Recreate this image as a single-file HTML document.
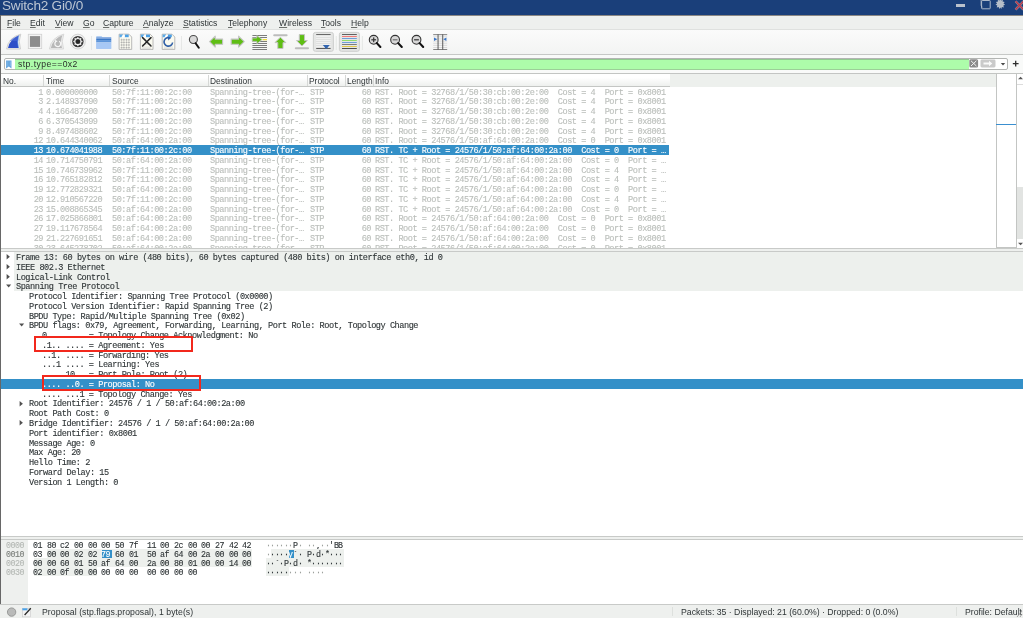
<!DOCTYPE html><html><head><meta charset="utf-8"><style>
*{margin:0;padding:0;box-sizing:border-box}
html,body{width:1023px;height:618px;overflow:hidden;background:#eef0ee}
body{position:relative;font-family:"Liberation Sans",sans-serif;font-size:8.6px;color:#2e3436}
.a{position:absolute}
.m{font-family:"Liberation Mono",monospace;font-size:8.6px;letter-spacing:-0.47px;white-space:pre;will-change:transform}
.hx{font-size:8.33px;letter-spacing:-0.457px}
.m{margin-left:-0.7px;margin-top:2px;-webkit-text-stroke:0.12px}
.t{white-space:pre;will-change:transform}
.row{position:absolute;left:1px;height:9.76px;line-height:9.76px}
.pl{color:#a7aca7}
.u{text-decoration:underline;text-underline-offset:1px;text-decoration-color:#6a6e6a}
</style></head><body>
<div class="a" style="left:0;top:0;width:1023px;height:14.6px;background:#1a3f7a"></div>
<div class="a t" style="left:2.4px;top:-1.9px;font-size:13.6px;letter-spacing:-0.22px;line-height:15px;color:#bcc6d3">Switch2 Gi0/0</div>
<div class="a" style="left:956px;top:4px;width:8.5px;height:2.8px;background:#b9c1cc"></div>
<svg class="a" style="left:978px;top:0" width="14" height="10"><path d="M3 0 V5.8 L4.6 7.2" stroke="#8a9ab2" fill="none" stroke-width="0.9"/><rect x="3.6" y="0.5" width="8.6" height="8.3" rx="0.6" fill="none" stroke="#bcc5d2" stroke-width="0.9"/></svg>
<svg class="a" style="left:995px;top:0" width="11" height="10"><path d="M5.3 -1.2 L6.1 0.6 L7.9 -0.3 L7.6 1.6 L9.7 1.9 L8.5 3.4 L10.1 4.8 L8.3 5.5 L8.9 7.5 L6.9 7.1 L6.3 9 L5.3 7.6 L4.3 9 L3.7 7.1 L1.7 7.5 L2.3 5.5 L0.5 4.8 L2.1 3.4 L0.9 1.9 L3 1.6 L2.7 -0.3 L4.5 0.6 Z" fill="#b5bec9"/></svg>
<svg class="a" style="left:1014px;top:0" width="9" height="11"><path d="M1.6 1.2 L9.5 9.6 M1.6 9.6 L9.5 1.2" stroke="#8d96a6" stroke-width="2.4"/><path d="M1.6 1.2 L9.5 9.6 M1.6 9.6 L9.5 1.2" stroke="#b8384a" stroke-width="1.5"/></svg>
<div class="a" style="left:0;top:14.5px;width:1023px;height:1px;background:#8b8884"></div>
<div class="a t" style="left:6.8px;top:17.6px;line-height:10px;color:#2e3436"><span class="u">F</span>ile</div>
<div class="a t" style="left:30px;top:17.6px;line-height:10px;color:#2e3436"><span class="u">E</span>dit</div>
<div class="a t" style="left:54.5px;top:17.6px;line-height:10px;color:#2e3436"><span class="u">V</span>iew</div>
<div class="a t" style="left:82.5px;top:17.6px;line-height:10px;color:#2e3436"><span class="u">G</span>o</div>
<div class="a t" style="left:102.6px;top:17.6px;line-height:10px;color:#2e3436"><span class="u">C</span>apture</div>
<div class="a t" style="left:143.2px;top:17.6px;line-height:10px;color:#2e3436"><span class="u">A</span>nalyze</div>
<div class="a t" style="left:183.2px;top:17.6px;line-height:10px;color:#2e3436"><span class="u">S</span>tatistics</div>
<div class="a t" style="left:228px;top:17.6px;line-height:10px;color:#2e3436"><span class="u">T</span>elephony</div>
<div class="a t" style="left:278.5px;top:17.6px;line-height:10px;color:#2e3436"><span class="u">W</span>ireless</div>
<div class="a t" style="left:321px;top:17.6px;line-height:10px;color:#2e3436"><span class="u">T</span>ools</div>
<div class="a t" style="left:351px;top:17.6px;line-height:10px;color:#2e3436"><span class="u">H</span>elp</div>
<div class="a" style="left:1px;top:29.2px;width:1022px;height:0.8px;background:#dfe1df"></div>
<div class="a" style="left:1px;top:30px;width:1022px;height:23.6px;background:linear-gradient(#fbfbfb,#f3f4f3)"></div>
<div class="a" style="left:1px;top:53.6px;width:1022px;height:1px;background:#c6c8c6"></div>
<div class="a" style="left:1px;top:54.6px;width:1022px;height:18.6px;background:#f9faf9"></div>
<div class="a" style="left:1px;top:73.2px;width:1022px;height:0.9px;background:#c3c5c3"></div>
<div class="a" style="left:0;top:15px;width:1.3px;height:589px;background:#676767"></div>
<svg class="a" style="left:0;top:0" width="460" height="56"><rect x="91.0" y="36" width="0.8" height="14" fill="#e2e4e2"/><rect x="181.1" y="36" width="0.8" height="14" fill="#e2e4e2"/><rect x="335.8" y="36" width="0.8" height="14" fill="#e2e4e2"/><rect x="361.90000000000003" y="36" width="0.8" height="14" fill="#e2e4e2"/><path d="M6.6 49 Q8.3 37.5 20.8 34.1 Q17.8 41 20.5 49 Z" fill="#ececec" stroke="#c6c6c6" stroke-width="0.8"/><path d="M8 48 Q10 38.8 19.4 35.3 Q16.8 41.5 19 48 Z" fill="#2d4fc8"/><path d="M9.5 41 Q13 37.5 19 35.6 Q17.2 38.5 17 41 Z" fill="#4a6ad6" opacity="0.6"/><path d="M18.8 35.8 Q17 41.5 18.6 47.8" stroke="#9cd0f6" stroke-width="0.6" fill="none"/><rect x="28.3" y="34.3" width="13.4" height="14.3" fill="#f5f5f5" stroke="#d0d0d0" stroke-width="0.8"/><rect x="29.9" y="36.1" width="10.2" height="10.8" fill="#8d8d8d"/><path d="M49.4 49 Q51.1 37.5 63.8 34.1 Q60.8 41 63.5 49 Z" fill="#eeeeee" stroke="#d2d2d2" stroke-width="0.8"/><path d="M50.9 48 Q52.9 38.8 62.4 35.3 Q59.8 41.5 62 48 Z" fill="#b8b8b8"/><path d="M55.6 41.8 A2.9 2.9 0 1 0 59.2 41.2" fill="none" stroke="#f6f6f6" stroke-width="1.3"/><path d="M55.2 39.6 L57.6 41.6 L55 42.6 Z" fill="#f6f6f6"/><circle cx="77.9" cy="41.6" r="7.4" fill="#f3f3f3" stroke="#c9c9c9" stroke-width="0.8"/><circle cx="77.9" cy="41.6" r="5.7" fill="#383838"/><circle cx="77.9" cy="41.6" r="3.1" fill="none" stroke="#f0f0f0" stroke-width="1.2"/><circle cx="81.80" cy="41.60" r="0.75" fill="#f0f0f0"/><circle cx="80.66" cy="44.36" r="0.75" fill="#f0f0f0"/><circle cx="77.90" cy="45.50" r="0.75" fill="#f0f0f0"/><circle cx="75.14" cy="44.36" r="0.75" fill="#f0f0f0"/><circle cx="74.00" cy="41.60" r="0.75" fill="#f0f0f0"/><circle cx="75.14" cy="38.84" r="0.75" fill="#f0f0f0"/><circle cx="77.90" cy="37.70" r="0.75" fill="#f0f0f0"/><circle cx="80.66" cy="38.84" r="0.75" fill="#f0f0f0"/><circle cx="77.9" cy="41.6" r="1.9" fill="#262626"/><path d="M96.3 36.2 H101.5 L102.5 37.2 H111.2 V48.8 H96.3 Z" fill="#9fc1ef"/><rect x="96.3" y="37.3" width="14.9" height="1.6" fill="#7fa5dc"/><rect x="96.3" y="38.9" width="14.9" height="1.5" fill="#3a78c6"/><rect x="96.3" y="40.4" width="14.9" height="2" fill="#5d95da"/><rect x="96.3" y="42.4" width="14.9" height="0.7" fill="#c6dbf6"/><rect x="96.3" y="43.1" width="14.9" height="5.7" fill="#a7c8f5"/><path d="M119.1 34.2 H128.89999999999998 L131.7 37 V49.4 H119.1 Z" fill="#fafaf0" stroke="#a8a8a8" stroke-width="0.8"/><path d="M119.5 34.6 H123.1 L121.5 37.2 H119.5 Z" fill="#5aaae8"/><path d="M124.69999999999999 34.6 H128.7 V37.2 H124.69999999999999 Z" fill="#4aa0e6"/><path d="M123.1 34.6 L121.5 37.2 H124.69999999999999 V34.6 Z" fill="#ffffff"/><path d="M140.4 34.2 H150.2 L153.0 37 V49.4 H140.4 Z" fill="#fafaf0" stroke="#a8a8a8" stroke-width="0.8"/><path d="M140.8 34.6 H144.4 L142.8 37.2 H140.8 Z" fill="#5aaae8"/><path d="M146.0 34.6 H150.0 V37.2 H146.0 Z" fill="#4aa0e6"/><path d="M144.4 34.6 L142.8 37.2 H146.0 V34.6 Z" fill="#ffffff"/><path d="M162.2 34.2 H171.99999999999997 L174.79999999999998 37 V49.4 H162.2 Z" fill="#fafaf0" stroke="#a8a8a8" stroke-width="0.8"/><path d="M162.6 34.6 H166.2 L164.6 37.2 H162.6 Z" fill="#5aaae8"/><path d="M167.79999999999998 34.6 H171.79999999999998 V37.2 H167.79999999999998 Z" fill="#4aa0e6"/><path d="M166.2 34.6 L164.6 37.2 H167.79999999999998 V34.6 Z" fill="#ffffff"/><path d="M121.6 38.699999999999996 V40.9 M120.5 39.8 H122.7" stroke="#9a9a9a" stroke-width="0.55"/><path d="M121.6 41.3 V43.5 M120.5 42.4 H122.7" stroke="#9a9a9a" stroke-width="0.55"/><path d="M121.6 43.9 V46.1 M120.5 45 H122.7" stroke="#9a9a9a" stroke-width="0.55"/><path d="M121.6 46.5 V48.7 M120.5 47.6 H122.7" stroke="#9a9a9a" stroke-width="0.55"/><path d="M123.89999999999999 38.699999999999996 V40.9 M122.8 39.8 H125.0" stroke="#9a9a9a" stroke-width="0.55"/><path d="M123.89999999999999 41.3 V43.5 M122.8 42.4 H125.0" stroke="#9a9a9a" stroke-width="0.55"/><path d="M123.89999999999999 43.9 V46.1 M122.8 45 H125.0" stroke="#9a9a9a" stroke-width="0.55"/><path d="M123.89999999999999 46.5 V48.7 M122.8 47.6 H125.0" stroke="#9a9a9a" stroke-width="0.55"/><path d="M126.5 38.699999999999996 V40.9 M125.4 39.8 H127.60000000000001" stroke="#9a9a9a" stroke-width="0.55"/><path d="M126.5 41.3 V43.5 M125.4 42.4 H127.60000000000001" stroke="#9a9a9a" stroke-width="0.55"/><path d="M126.5 43.9 V46.1 M125.4 45 H127.60000000000001" stroke="#9a9a9a" stroke-width="0.55"/><path d="M126.5 46.5 V48.7 M125.4 47.6 H127.60000000000001" stroke="#9a9a9a" stroke-width="0.55"/><path d="M128.9 38.699999999999996 V40.9 M127.8 39.8 H130.0" stroke="#9a9a9a" stroke-width="0.55"/><path d="M128.9 41.3 V43.5 M127.8 42.4 H130.0" stroke="#9a9a9a" stroke-width="0.55"/><path d="M128.9 43.9 V46.1 M127.8 45 H130.0" stroke="#9a9a9a" stroke-width="0.55"/><path d="M128.9 46.5 V48.7 M127.8 47.6 H130.0" stroke="#9a9a9a" stroke-width="0.55"/><rect x="142" y="44.5" width="9" height="0.5" fill="#c8c8c8"/><rect x="142" y="46.8" width="9" height="0.5" fill="#c8c8c8"/><rect x="142" y="48.6" width="9" height="0.5" fill="#c8c8c8"/><path d="M142.6 37.6 L151 46 M151 37.6 L142.6 46" stroke="#242424" stroke-width="1.5" stroke-linecap="round"/><rect x="164" y="46.8" width="9" height="0.5" fill="#c8c8c8"/><rect x="164" y="48.6" width="9" height="0.5" fill="#c8c8c8"/><path d="M170.6 38.2 A4.3 4.3 0 1 0 172.6 42.5" fill="none" stroke="#2f5ea6" stroke-width="1.6"/><path d="M167 36.4 L170.6 37.6 L168.6 40.4 Z" fill="#2f5ea6"/><circle cx="193.4" cy="39.5" r="4" fill="#d9d9d9" stroke="#4a4a4a" stroke-width="1.1"/><path d="M195.6 43.2 L198.8 47.8" stroke="#111" stroke-width="2" stroke-linecap="round"/><path d="M209.6 41.6 L215.2 36.2 V39.1 H222.6 V44.2 H215.2 V47.1 Z" fill="#5fbe14" stroke="#c4c4c4" stroke-width="1.1" stroke-linejoin="round"/><path d="M244.2 41.6 L238.6 36.2 V39.1 H231.2 V44.2 H238.6 V47.1 Z" fill="#5fbe14" stroke="#c4c4c4" stroke-width="1.1" stroke-linejoin="round"/><rect x="252.4" y="35.0" width="14.6" height="0.9" fill="#6e6e6e"/><rect x="252.4" y="37.1" width="14.6" height="0.9" fill="#6e6e6e"/><rect x="252.4" y="41.1" width="14.6" height="0.9" fill="#6e6e6e"/><rect x="252.4" y="43.1" width="14.6" height="0.9" fill="#6e6e6e"/><rect x="252.4" y="45.1" width="14.6" height="0.9" fill="#6e6e6e"/><rect x="252.4" y="47.1" width="14.6" height="0.9" fill="#6e6e6e"/><rect x="252.4" y="49.0" width="14.6" height="0.9" fill="#6e6e6e"/><rect x="262.6" y="39" width="4.4" height="1.3" fill="#f0dc3c"/><path d="M252.2 38 H256.8 V35.6 L262.2 39.6 L256.8 43.8 V41.4 H252.2 Z" fill="#5fbe14" stroke="#c8c8c8" stroke-width="0.8" stroke-linejoin="round"/><rect x="273.2" y="34.2" width="14.4" height="2" rx="1" fill="#bdbdbd"/><path d="M280.4 37.2 L285.8 42.6 H283 V48.5 H277.8 V42.6 H275 Z" fill="#5fbe14" stroke="#c2c2c2" stroke-width="1" stroke-linejoin="round"/><rect x="294.8" y="47.2" width="14.2" height="2" rx="1" fill="#bdbdbd"/><path d="M301.9 46 L307.3 40.6 H304.5 V34.6 H299.3 V40.6 H296.5 Z" fill="#5fbe14" stroke="#c2c2c2" stroke-width="1" stroke-linejoin="round"/><rect x="313.4" y="32.4" width="20" height="18.9" rx="2" fill="#e5e6e5" stroke="#cacbca" stroke-width="0.9"/><rect x="316.2" y="34.0" width="14.4" height="0.9" fill="#5a5a5a"/><rect x="316.2" y="36.0" width="14.4" height="0.9" fill="#f4f4f4"/><rect x="316.2" y="38.0" width="14.4" height="0.9" fill="#f4f4f4"/><rect x="316.2" y="40.0" width="14.4" height="0.9" fill="#f4f4f4"/><rect x="316.2" y="42.0" width="14.4" height="0.9" fill="#f4f4f4"/><rect x="316.2" y="44.0" width="14.4" height="0.9" fill="#f4f4f4"/><rect x="316.2" y="46.0" width="14.4" height="0.9" fill="#f4f4f4"/><rect x="316.2" y="48.0" width="14.4" height="0.9" fill="#4a4a4a"/><rect x="316.2" y="36.9" width="14.4" height="0.5" fill="#d6d8d6"/><rect x="316.2" y="38.9" width="14.4" height="0.5" fill="#d6d8d6"/><rect x="316.2" y="40.9" width="14.4" height="0.5" fill="#d6d8d6"/><rect x="316.2" y="42.9" width="14.4" height="0.5" fill="#d6d8d6"/><rect x="316.2" y="44.9" width="14.4" height="0.5" fill="#d6d8d6"/><rect x="316.2" y="46.9" width="14.4" height="0.5" fill="#d6d8d6"/><path d="M322.8 45 H329.8 L327.6 47.6 V48.6 H325 V47.6 Z" fill="#3466b0"/><rect x="339.4" y="32.4" width="20" height="18.9" rx="2" fill="#e5e6e5" stroke="#cacbca" stroke-width="0.9"/><rect x="342" y="34.0" width="14.8" height="1" fill="#606060"/><rect x="342" y="36.0" width="14.8" height="1" fill="#f07a7a"/><rect x="342" y="38.0" width="14.8" height="1" fill="#6e9fd8"/><rect x="342" y="40.0" width="14.8" height="1" fill="#92dc6e"/><rect x="342" y="42.0" width="14.8" height="1" fill="#6e9fd8"/><rect x="342" y="44.0" width="14.8" height="1" fill="#7d7d7d"/><rect x="342" y="46.0" width="14.8" height="1" fill="#e3c94a"/><rect x="342" y="48.0" width="14.8" height="1" fill="#4e4e4e"/><circle cx="373.7" cy="39.8" r="4.4" fill="#d8d8d8" stroke="#333" stroke-width="1.1"/><path d="M376.8 43.1 L380.4 47" stroke="#111" stroke-width="2.1" stroke-linecap="round"/><rect x="371.3" y="39.2" width="4.8" height="1.2" fill="#333"/><rect x="373.09999999999997" y="37.4" width="1.2" height="4.8" fill="#333"/><circle cx="395.1" cy="39.8" r="4.4" fill="#d8d8d8" stroke="#333" stroke-width="1.1"/><path d="M398.20000000000005 43.1 L401.8 47" stroke="#111" stroke-width="2.1" stroke-linecap="round"/><rect x="392.70000000000005" y="39.2" width="4.8" height="1.2" fill="#707070"/><circle cx="416.5" cy="39.8" r="4.4" fill="#d8d8d8" stroke="#333" stroke-width="1.1"/><path d="M419.6 43.1 L423.2 47" stroke="#111" stroke-width="2.1" stroke-linecap="round"/><rect x="414.1" y="39.2" width="4.8" height="1.2" fill="#333"/><rect x="433.2" y="34.40" width="14" height="0.7" fill="#505050"/><rect x="433.2" y="36.50" width="14" height="0.7" fill="#cfcfcf"/><rect x="433.2" y="38.60" width="14" height="0.7" fill="#cfcfcf"/><rect x="433.2" y="40.70" width="14" height="0.7" fill="#cfcfcf"/><rect x="433.2" y="42.80" width="14" height="0.7" fill="#cfcfcf"/><rect x="433.2" y="44.90" width="14" height="0.7" fill="#cfcfcf"/><rect x="433.2" y="47.00" width="14" height="0.7" fill="#cfcfcf"/><rect x="433.2" y="49.10" width="14" height="0.7" fill="#505050"/><rect x="437.6" y="34.4" width="0.9" height="15.2" fill="#4a4a4a"/><rect x="442.3" y="34.4" width="0.9" height="15.2" fill="#4a4a4a"/><path d="M434 37.4 L437.2 39.2 L434 41 Z" fill="#3a76c8"/><path d="M446.4 37.4 L443.3 39.2 L446.4 41 Z" fill="#3a76c8"/></svg>
<div class="a" style="left:3.5px;top:58.3px;width:1004.3px;height:11.9px;border:0.8px solid #b3b5b3;border-radius:2px;background:#fff"></div>
<div class="a" style="left:15.3px;top:58.9px;width:953.6px;height:10.8px;background:#adfcaa;border-top:0.6px solid #92c990;border-bottom:0.7px solid #9ccf98"></div>
<svg class="a" style="left:5px;top:59.5px" width="9" height="10"><path d="M1 0.5 H6.5 V8.6 L3.75 6.6 L1 8.6 Z" fill="#6aa9e0"/><path d="M2 1.4 V6 M5.5 1.4 V6" stroke="#9ec7ee" stroke-width="0.5"/></svg>
<div class="a t" style="left:17.9px;top:59.4px;line-height:10px;letter-spacing:0.45px;color:#2a2d2a">stp.type==0x2</div>
<svg class="a" style="left:969px;top:59.3px" width="28" height="10"><rect x="0.3" y="0.2" width="8.8" height="8.4" rx="1.5" fill="#8a8a8a"/><path d="M2 1.8 L7.4 7 M7.4 1.8 L2 7" stroke="#f4f4f4" stroke-width="1"/><rect x="11.5" y="0.5" width="15" height="8" rx="1.4" fill="#cacaca"/><path d="M14.5 3.5 H20 V1.8 L23.3 4.5 L20 7.2 V5.5 H14.5 Z" fill="#fafafa"/></svg>
<svg class="a" style="left:1000px;top:61.5px" width="6" height="4"><path d="M0.8 1 H5.2 L3 3.4 Z" fill="#4a4a4a"/></svg>
<svg class="a" style="left:1012px;top:60px" width="8" height="8"><path d="M0.8 3.7 H6.6 M3.7 0.8 V6.6" stroke="#2e2e2e" stroke-width="1.3"/></svg>
<div class="a" style="left:1.3px;top:74.1px;width:1021.7px;height:174.20000000000002px;background:#fff;overflow:hidden">
<div class="a" style="left:0;top:0;width:995.1px;height:13.100000000000012px;background:#edf0ed"></div>
<div class="a" style="left:0;top:0;width:668.6px;height:12.800000000000011px;background:linear-gradient(#ffffff 30%,#eef0ee);border-bottom:0.9px solid #c4c6c4"></div>
<div class="a" style="left:41.6px;top:0.5px;width:0.8px;height:11.4px;background:#d6d8d6"></div>
<div class="a" style="left:108.0px;top:0.5px;width:0.8px;height:11.4px;background:#d6d8d6"></div>
<div class="a" style="left:206.79999999999998px;top:0.5px;width:0.8px;height:11.4px;background:#d6d8d6"></div>
<div class="a" style="left:305.8px;top:0.5px;width:0.8px;height:11.4px;background:#d6d8d6"></div>
<div class="a" style="left:343.8px;top:0.5px;width:0.8px;height:11.4px;background:#d6d8d6"></div>
<div class="a" style="left:371.90000000000003px;top:0.5px;width:0.8px;height:11.4px;background:#d6d8d6"></div>
<div class="a t" style="left:1.5999999999999999px;top:1.6px;line-height:10px;font-size:8.4px;color:#2e3436">No.</div>
<div class="a t" style="left:44.5px;top:1.6px;line-height:10px;font-size:8.4px;color:#2e3436">Time</div>
<div class="a t" style="left:110.7px;top:1.6px;line-height:10px;font-size:8.4px;color:#2e3436">Source</div>
<div class="a t" style="left:209.2px;top:1.6px;line-height:10px;font-size:8.4px;color:#2e3436">Destination</div>
<div class="a t" style="left:308.2px;top:1.6px;line-height:10px;font-size:8.4px;color:#2e3436">Protocol</div>
<div class="a t" style="left:346.09999999999997px;top:1.6px;width:25.700000000000045px;overflow:hidden;line-height:10px;font-size:8.4px;color:#2e3436">Length</div>
<div class="a t" style="left:373.9px;top:1.6px;line-height:10px;font-size:8.4px;color:#2e3436">Info</div>
<div class="a m" style="left:-17.799999999999997px;width:60px;text-align:right;top:12.5px;line-height:9.76px;color:#babeba">1</div>
<div class="a m" style="left:45.400000000000006px;top:12.5px;line-height:9.76px;color:#babeba">0.000000000</div>
<div class="a m" style="left:111.10000000000001px;top:12.5px;line-height:9.76px;color:#babeba">50:7f:11:00:2c:00</div>
<div class="a m" style="left:209.85px;top:12.5px;line-height:9.76px;color:#babeba">Spanning-tree-(for-…</div>
<div class="a m" style="left:309.0px;top:12.5px;line-height:9.76px;color:#babeba">STP</div>
<div class="a m" style="left:310.59999999999997px;width:60px;text-align:right;top:12.5px;line-height:9.76px;color:#babeba">60</div>
<div class="a m" style="left:374.3px;top:12.5px;line-height:9.76px;color:#babeba">RST. Root = 32768/1/50:30:cb:00:2e:00  Cost = 4  Port = 0x8001</div>
<div class="a m" style="left:-17.799999999999997px;width:60px;text-align:right;top:22.260000000000005px;line-height:9.76px;color:#babeba">3</div>
<div class="a m" style="left:45.400000000000006px;top:22.260000000000005px;line-height:9.76px;color:#babeba">2.148937090</div>
<div class="a m" style="left:111.10000000000001px;top:22.260000000000005px;line-height:9.76px;color:#babeba">50:7f:11:00:2c:00</div>
<div class="a m" style="left:209.85px;top:22.260000000000005px;line-height:9.76px;color:#babeba">Spanning-tree-(for-…</div>
<div class="a m" style="left:309.0px;top:22.260000000000005px;line-height:9.76px;color:#babeba">STP</div>
<div class="a m" style="left:310.59999999999997px;width:60px;text-align:right;top:22.260000000000005px;line-height:9.76px;color:#babeba">60</div>
<div class="a m" style="left:374.3px;top:22.260000000000005px;line-height:9.76px;color:#babeba">RST. Root = 32768/1/50:30:cb:00:2e:00  Cost = 4  Port = 0x8001</div>
<div class="a m" style="left:-17.799999999999997px;width:60px;text-align:right;top:32.019999999999996px;line-height:9.76px;color:#babeba">4</div>
<div class="a m" style="left:45.400000000000006px;top:32.019999999999996px;line-height:9.76px;color:#babeba">4.166487200</div>
<div class="a m" style="left:111.10000000000001px;top:32.019999999999996px;line-height:9.76px;color:#babeba">50:7f:11:00:2c:00</div>
<div class="a m" style="left:209.85px;top:32.019999999999996px;line-height:9.76px;color:#babeba">Spanning-tree-(for-…</div>
<div class="a m" style="left:309.0px;top:32.019999999999996px;line-height:9.76px;color:#babeba">STP</div>
<div class="a m" style="left:310.59999999999997px;width:60px;text-align:right;top:32.019999999999996px;line-height:9.76px;color:#babeba">60</div>
<div class="a m" style="left:374.3px;top:32.019999999999996px;line-height:9.76px;color:#babeba">RST. Root = 32768/1/50:30:cb:00:2e:00  Cost = 4  Port = 0x8001</div>
<div class="a m" style="left:-17.799999999999997px;width:60px;text-align:right;top:41.78px;line-height:9.76px;color:#babeba">6</div>
<div class="a m" style="left:45.400000000000006px;top:41.78px;line-height:9.76px;color:#babeba">6.370543099</div>
<div class="a m" style="left:111.10000000000001px;top:41.78px;line-height:9.76px;color:#babeba">50:7f:11:00:2c:00</div>
<div class="a m" style="left:209.85px;top:41.78px;line-height:9.76px;color:#babeba">Spanning-tree-(for-…</div>
<div class="a m" style="left:309.0px;top:41.78px;line-height:9.76px;color:#babeba">STP</div>
<div class="a m" style="left:310.59999999999997px;width:60px;text-align:right;top:41.78px;line-height:9.76px;color:#babeba">60</div>
<div class="a m" style="left:374.3px;top:41.78px;line-height:9.76px;color:#babeba">RST. Root = 32768/1/50:30:cb:00:2e:00  Cost = 4  Port = 0x8001</div>
<div class="a m" style="left:-17.799999999999997px;width:60px;text-align:right;top:51.53999999999999px;line-height:9.76px;color:#babeba">9</div>
<div class="a m" style="left:45.400000000000006px;top:51.53999999999999px;line-height:9.76px;color:#babeba">8.497488602</div>
<div class="a m" style="left:111.10000000000001px;top:51.53999999999999px;line-height:9.76px;color:#babeba">50:7f:11:00:2c:00</div>
<div class="a m" style="left:209.85px;top:51.53999999999999px;line-height:9.76px;color:#babeba">Spanning-tree-(for-…</div>
<div class="a m" style="left:309.0px;top:51.53999999999999px;line-height:9.76px;color:#babeba">STP</div>
<div class="a m" style="left:310.59999999999997px;width:60px;text-align:right;top:51.53999999999999px;line-height:9.76px;color:#babeba">60</div>
<div class="a m" style="left:374.3px;top:51.53999999999999px;line-height:9.76px;color:#babeba">RST. Root = 32768/1/50:30:cb:00:2e:00  Cost = 4  Port = 0x8001</div>
<div class="a m" style="left:-17.799999999999997px;width:60px;text-align:right;top:61.29999999999998px;line-height:9.76px;color:#babeba">12</div>
<div class="a m" style="left:45.400000000000006px;top:61.29999999999998px;line-height:9.76px;color:#babeba">10.644340062</div>
<div class="a m" style="left:111.10000000000001px;top:61.29999999999998px;line-height:9.76px;color:#babeba">50:af:64:00:2a:00</div>
<div class="a m" style="left:209.85px;top:61.29999999999998px;line-height:9.76px;color:#babeba">Spanning-tree-(for-…</div>
<div class="a m" style="left:309.0px;top:61.29999999999998px;line-height:9.76px;color:#babeba">STP</div>
<div class="a m" style="left:310.59999999999997px;width:60px;text-align:right;top:61.29999999999998px;line-height:9.76px;color:#babeba">60</div>
<div class="a m" style="left:374.3px;top:61.29999999999998px;line-height:9.76px;color:#babeba">RST. Root = 24576/1/50:af:64:00:2a:00  Cost = 0  Port = 0x8001</div>
<div class="a" style="left:0;top:71.06px;width:667.7px;height:9.76px;background:#3490c8"></div>
<div class="a m" style="left:-17.799999999999997px;width:60px;text-align:right;top:71.06px;line-height:9.76px;color:#ffffff">13</div>
<div class="a m" style="left:45.400000000000006px;top:71.06px;line-height:9.76px;color:#ffffff">10.674041988</div>
<div class="a m" style="left:111.10000000000001px;top:71.06px;line-height:9.76px;color:#ffffff">50:7f:11:00:2c:00</div>
<div class="a m" style="left:209.85px;top:71.06px;line-height:9.76px;color:#ffffff">Spanning-tree-(for-…</div>
<div class="a m" style="left:309.0px;top:71.06px;line-height:9.76px;color:#ffffff">STP</div>
<div class="a m" style="left:310.59999999999997px;width:60px;text-align:right;top:71.06px;line-height:9.76px;color:#ffffff">60</div>
<div class="a m" style="left:374.3px;top:71.06px;line-height:9.76px;color:#ffffff">RST. TC + Root = 24576/1/50:af:64:00:2a:00  Cost = 0  Port = …</div>
<div class="a m" style="left:-17.799999999999997px;width:60px;text-align:right;top:80.82px;line-height:9.76px;color:#babeba">14</div>
<div class="a m" style="left:45.400000000000006px;top:80.82px;line-height:9.76px;color:#babeba">10.714750791</div>
<div class="a m" style="left:111.10000000000001px;top:80.82px;line-height:9.76px;color:#babeba">50:af:64:00:2a:00</div>
<div class="a m" style="left:209.85px;top:80.82px;line-height:9.76px;color:#babeba">Spanning-tree-(for-…</div>
<div class="a m" style="left:309.0px;top:80.82px;line-height:9.76px;color:#babeba">STP</div>
<div class="a m" style="left:310.59999999999997px;width:60px;text-align:right;top:80.82px;line-height:9.76px;color:#babeba">60</div>
<div class="a m" style="left:374.3px;top:80.82px;line-height:9.76px;color:#babeba">RST. TC + Root = 24576/1/50:af:64:00:2a:00  Cost = 0  Port = …</div>
<div class="a m" style="left:-17.799999999999997px;width:60px;text-align:right;top:90.58000000000001px;line-height:9.76px;color:#babeba">15</div>
<div class="a m" style="left:45.400000000000006px;top:90.58000000000001px;line-height:9.76px;color:#babeba">10.746739962</div>
<div class="a m" style="left:111.10000000000001px;top:90.58000000000001px;line-height:9.76px;color:#babeba">50:7f:11:00:2c:00</div>
<div class="a m" style="left:209.85px;top:90.58000000000001px;line-height:9.76px;color:#babeba">Spanning-tree-(for-…</div>
<div class="a m" style="left:309.0px;top:90.58000000000001px;line-height:9.76px;color:#babeba">STP</div>
<div class="a m" style="left:310.59999999999997px;width:60px;text-align:right;top:90.58000000000001px;line-height:9.76px;color:#babeba">60</div>
<div class="a m" style="left:374.3px;top:90.58000000000001px;line-height:9.76px;color:#babeba">RST. TC + Root = 24576/1/50:af:64:00:2a:00  Cost = 4  Port = …</div>
<div class="a m" style="left:-17.799999999999997px;width:60px;text-align:right;top:100.34px;line-height:9.76px;color:#babeba">16</div>
<div class="a m" style="left:45.400000000000006px;top:100.34px;line-height:9.76px;color:#babeba">10.765182812</div>
<div class="a m" style="left:111.10000000000001px;top:100.34px;line-height:9.76px;color:#babeba">50:7f:11:00:2c:00</div>
<div class="a m" style="left:209.85px;top:100.34px;line-height:9.76px;color:#babeba">Spanning-tree-(for-…</div>
<div class="a m" style="left:309.0px;top:100.34px;line-height:9.76px;color:#babeba">STP</div>
<div class="a m" style="left:310.59999999999997px;width:60px;text-align:right;top:100.34px;line-height:9.76px;color:#babeba">60</div>
<div class="a m" style="left:374.3px;top:100.34px;line-height:9.76px;color:#babeba">RST. TC + Root = 24576/1/50:af:64:00:2a:00  Cost = 4  Port = …</div>
<div class="a m" style="left:-17.799999999999997px;width:60px;text-align:right;top:110.1px;line-height:9.76px;color:#babeba">19</div>
<div class="a m" style="left:45.400000000000006px;top:110.1px;line-height:9.76px;color:#babeba">12.772829321</div>
<div class="a m" style="left:111.10000000000001px;top:110.1px;line-height:9.76px;color:#babeba">50:af:64:00:2a:00</div>
<div class="a m" style="left:209.85px;top:110.1px;line-height:9.76px;color:#babeba">Spanning-tree-(for-…</div>
<div class="a m" style="left:309.0px;top:110.1px;line-height:9.76px;color:#babeba">STP</div>
<div class="a m" style="left:310.59999999999997px;width:60px;text-align:right;top:110.1px;line-height:9.76px;color:#babeba">60</div>
<div class="a m" style="left:374.3px;top:110.1px;line-height:9.76px;color:#babeba">RST. TC + Root = 24576/1/50:af:64:00:2a:00  Cost = 0  Port = …</div>
<div class="a m" style="left:-17.799999999999997px;width:60px;text-align:right;top:119.85999999999999px;line-height:9.76px;color:#babeba">20</div>
<div class="a m" style="left:45.400000000000006px;top:119.85999999999999px;line-height:9.76px;color:#babeba">12.910567220</div>
<div class="a m" style="left:111.10000000000001px;top:119.85999999999999px;line-height:9.76px;color:#babeba">50:7f:11:00:2c:00</div>
<div class="a m" style="left:209.85px;top:119.85999999999999px;line-height:9.76px;color:#babeba">Spanning-tree-(for-…</div>
<div class="a m" style="left:309.0px;top:119.85999999999999px;line-height:9.76px;color:#babeba">STP</div>
<div class="a m" style="left:310.59999999999997px;width:60px;text-align:right;top:119.85999999999999px;line-height:9.76px;color:#babeba">60</div>
<div class="a m" style="left:374.3px;top:119.85999999999999px;line-height:9.76px;color:#babeba">RST. TC + Root = 24576/1/50:af:64:00:2a:00  Cost = 4  Port = …</div>
<div class="a m" style="left:-17.799999999999997px;width:60px;text-align:right;top:129.62px;line-height:9.76px;color:#babeba">23</div>
<div class="a m" style="left:45.400000000000006px;top:129.62px;line-height:9.76px;color:#babeba">15.008865345</div>
<div class="a m" style="left:111.10000000000001px;top:129.62px;line-height:9.76px;color:#babeba">50:af:64:00:2a:00</div>
<div class="a m" style="left:209.85px;top:129.62px;line-height:9.76px;color:#babeba">Spanning-tree-(for-…</div>
<div class="a m" style="left:309.0px;top:129.62px;line-height:9.76px;color:#babeba">STP</div>
<div class="a m" style="left:310.59999999999997px;width:60px;text-align:right;top:129.62px;line-height:9.76px;color:#babeba">60</div>
<div class="a m" style="left:374.3px;top:129.62px;line-height:9.76px;color:#babeba">RST. TC + Root = 24576/1/50:af:64:00:2a:00  Cost = 0  Port = …</div>
<div class="a m" style="left:-17.799999999999997px;width:60px;text-align:right;top:139.38px;line-height:9.76px;color:#babeba">26</div>
<div class="a m" style="left:45.400000000000006px;top:139.38px;line-height:9.76px;color:#babeba">17.025866801</div>
<div class="a m" style="left:111.10000000000001px;top:139.38px;line-height:9.76px;color:#babeba">50:af:64:00:2a:00</div>
<div class="a m" style="left:209.85px;top:139.38px;line-height:9.76px;color:#babeba">Spanning-tree-(for-…</div>
<div class="a m" style="left:309.0px;top:139.38px;line-height:9.76px;color:#babeba">STP</div>
<div class="a m" style="left:310.59999999999997px;width:60px;text-align:right;top:139.38px;line-height:9.76px;color:#babeba">60</div>
<div class="a m" style="left:374.3px;top:139.38px;line-height:9.76px;color:#babeba">RST. Root = 24576/1/50:af:64:00:2a:00  Cost = 0  Port = 0x8001</div>
<div class="a m" style="left:-17.799999999999997px;width:60px;text-align:right;top:149.14px;line-height:9.76px;color:#babeba">27</div>
<div class="a m" style="left:45.400000000000006px;top:149.14px;line-height:9.76px;color:#babeba">19.117678564</div>
<div class="a m" style="left:111.10000000000001px;top:149.14px;line-height:9.76px;color:#babeba">50:af:64:00:2a:00</div>
<div class="a m" style="left:209.85px;top:149.14px;line-height:9.76px;color:#babeba">Spanning-tree-(for-…</div>
<div class="a m" style="left:309.0px;top:149.14px;line-height:9.76px;color:#babeba">STP</div>
<div class="a m" style="left:310.59999999999997px;width:60px;text-align:right;top:149.14px;line-height:9.76px;color:#babeba">60</div>
<div class="a m" style="left:374.3px;top:149.14px;line-height:9.76px;color:#babeba">RST. Root = 24576/1/50:af:64:00:2a:00  Cost = 0  Port = 0x8001</div>
<div class="a m" style="left:-17.799999999999997px;width:60px;text-align:right;top:158.9px;line-height:9.76px;color:#babeba">29</div>
<div class="a m" style="left:45.400000000000006px;top:158.9px;line-height:9.76px;color:#babeba">21.227691651</div>
<div class="a m" style="left:111.10000000000001px;top:158.9px;line-height:9.76px;color:#babeba">50:af:64:00:2a:00</div>
<div class="a m" style="left:209.85px;top:158.9px;line-height:9.76px;color:#babeba">Spanning-tree-(for-…</div>
<div class="a m" style="left:309.0px;top:158.9px;line-height:9.76px;color:#babeba">STP</div>
<div class="a m" style="left:310.59999999999997px;width:60px;text-align:right;top:158.9px;line-height:9.76px;color:#babeba">60</div>
<div class="a m" style="left:374.3px;top:158.9px;line-height:9.76px;color:#babeba">RST. Root = 24576/1/50:af:64:00:2a:00  Cost = 0  Port = 0x8001</div>
<div class="a m" style="left:-17.799999999999997px;width:60px;text-align:right;top:168.66px;line-height:9.76px;color:#babeba">30</div>
<div class="a m" style="left:45.400000000000006px;top:168.66px;line-height:9.76px;color:#babeba">23.645278702</div>
<div class="a m" style="left:111.10000000000001px;top:168.66px;line-height:9.76px;color:#babeba">50:af:64:00:2a:00</div>
<div class="a m" style="left:209.85px;top:168.66px;line-height:9.76px;color:#babeba">Spanning-tree-(for-…</div>
<div class="a m" style="left:309.0px;top:168.66px;line-height:9.76px;color:#babeba">STP</div>
<div class="a m" style="left:310.59999999999997px;width:60px;text-align:right;top:168.66px;line-height:9.76px;color:#babeba">60</div>
<div class="a m" style="left:374.3px;top:168.66px;line-height:9.76px;color:#babeba">RST. Root = 24576/1/50:af:64:00:2a:00  Cost = 0  Port = 0x8001</div>
<div class="a" style="left:994.7px;top:0;width:21.0px;height:173.60000000000002px;background:#fff;border-left:0.8px solid #c3c5c3;border-right:0.8px solid #c3c5c3;border-bottom:0.8px solid #c3c5c3"></div>
<div class="a" style="left:995.1px;top:50.0px;width:19.300000000000022px;height:0.9px;background:#3a8fd0"></div>
<div class="a" style="left:1015.9000000000001px;top:0;width:6px;height:174.20000000000002px;background:#fff"></div>
<div class="a" style="left:1015.9000000000001px;top:112.5px;width:6px;height:52.70000000000002px;background:#e2e4e2"></div>
<div class="a" style="left:1015.9000000000001px;top:9.5px;width:6px;height:0.7px;background:#dcdcdc"></div>
<svg class="a" style="left:1015.9000000000001px;top:2.4000000000000057px" width="6" height="4"><path d="M1 3.2 H6 L3.6 0.8 Z" fill="#555"/></svg>
<svg class="a" style="left:1015.9000000000001px;top:167.5px" width="6" height="4"><path d="M1 0.8 H6 L3.6 3.2 Z" fill="#555"/></svg>
</div>
<div class="a" style="left:1.3px;top:248.3px;width:1021.7px;height:0.9px;background:#c8cac8"></div>
<div class="a" style="left:1.3px;top:251.2px;width:1021.7px;height:0.9px;background:#c8cac8"></div>
<div class="a" style="left:1.3px;top:252.1px;width:1021.7px;height:284.0px;background:#fff;overflow:hidden">
<div class="a" style="left:12.799999999999999px;top:0;width:1010px;height:39.24px;background:#edf0ed"></div>
<svg class="a" style="left:5.000000000000001px;top:2.2px" width="5" height="6"><path d="M0.6 0 L3.9 2.8 L0.6 5.6 Z" fill="#505050"/></svg>
<div class="a m" style="left:15.3px;top:0.0px;line-height:9.76px;color:#2e3436">Frame 13: 60 bytes on wire (480 bits), 60 bytes captured (480 bits) on interface eth0, id 0</div>
<svg class="a" style="left:5.000000000000001px;top:11.96px" width="5" height="6"><path d="M0.6 0 L3.9 2.8 L0.6 5.6 Z" fill="#505050"/></svg>
<div class="a m" style="left:15.3px;top:9.76px;line-height:9.76px;color:#2e3436">IEEE 802.3 Ethernet</div>
<svg class="a" style="left:5.000000000000001px;top:21.72px" width="5" height="6"><path d="M0.6 0 L3.9 2.8 L0.6 5.6 Z" fill="#505050"/></svg>
<div class="a m" style="left:15.3px;top:19.52px;line-height:9.76px;color:#2e3436">Logical-Link Control</div>
<svg class="a" style="left:4.400000000000001px;top:32.28px" width="6" height="5"><path d="M0.1 0.5 H5.2 L2.65 3.6 Z" fill="#505050"/></svg>
<div class="a m" style="left:15.3px;top:29.28px;line-height:9.76px;color:#2e3436">Spanning Tree Protocol</div>
<div class="a m" style="left:28.3px;top:39.04px;line-height:9.76px;color:#2e3436">Protocol Identifier: Spanning Tree Protocol (0x0000)</div>
<div class="a m" style="left:28.3px;top:48.8px;line-height:9.76px;color:#2e3436">Protocol Version Identifier: Rapid Spanning Tree (2)</div>
<div class="a m" style="left:28.3px;top:58.56px;line-height:9.76px;color:#2e3436">BPDU Type: Rapid/Multiple Spanning Tree (0x02)</div>
<svg class="a" style="left:17.4px;top:71.32px" width="6" height="5"><path d="M0.1 0.5 H5.2 L2.65 3.6 Z" fill="#505050"/></svg>
<div class="a m" style="left:28.3px;top:68.32px;line-height:9.76px;color:#2e3436">BPDU flags: 0x79, Agreement, Forwarding, Learning, Port Role: Root, Topology Change</div>
<div class="a m" style="left:41.300000000000004px;top:78.08px;line-height:9.76px;color:#2e3436">0... .... = Topology Change Acknowledgment: No</div>
<div class="a m" style="left:41.300000000000004px;top:87.84px;line-height:9.76px;color:#2e3436">.1.. .... = Agreement: Yes</div>
<div class="a m" style="left:41.300000000000004px;top:97.6px;line-height:9.76px;color:#2e3436">..1. .... = Forwarding: Yes</div>
<div class="a m" style="left:41.300000000000004px;top:107.36px;line-height:9.76px;color:#2e3436">...1 .... = Learning: Yes</div>
<div class="a m" style="left:41.300000000000004px;top:117.12px;line-height:9.76px;color:#2e3436">.... 10.. = Port Role: Root (2)</div>
<div class="a" style="left:0;top:126.97999999999999px;width:1021.7px;height:9.76px;background:#3490c8"></div>
<div class="a m" style="left:41.300000000000004px;top:126.88px;line-height:9.76px;color:#ffffff">.... ..0. = Proposal: No</div>
<div class="a m" style="left:41.300000000000004px;top:136.64px;line-height:9.76px;color:#2e3436">.... ...1 = Topology Change: Yes</div>
<svg class="a" style="left:18.0px;top:148.6px" width="5" height="6"><path d="M0.6 0 L3.9 2.8 L0.6 5.6 Z" fill="#505050"/></svg>
<div class="a m" style="left:28.3px;top:146.4px;line-height:9.76px;color:#2e3436">Root Identifier: 24576 / 1 / 50:af:64:00:2a:00</div>
<div class="a m" style="left:28.3px;top:156.16px;line-height:9.76px;color:#2e3436">Root Path Cost: 0</div>
<svg class="a" style="left:18.0px;top:168.11999999999998px" width="5" height="6"><path d="M0.6 0 L3.9 2.8 L0.6 5.6 Z" fill="#505050"/></svg>
<div class="a m" style="left:28.3px;top:165.92px;line-height:9.76px;color:#2e3436">Bridge Identifier: 24576 / 1 / 50:af:64:00:2a:00</div>
<div class="a m" style="left:28.3px;top:175.68px;line-height:9.76px;color:#2e3436">Port identifier: 0x8001</div>
<div class="a m" style="left:28.3px;top:185.44px;line-height:9.76px;color:#2e3436">Message Age: 0</div>
<div class="a m" style="left:28.3px;top:195.2px;line-height:9.76px;color:#2e3436">Max Age: 20</div>
<div class="a m" style="left:28.3px;top:204.96px;line-height:9.76px;color:#2e3436">Hello Time: 2</div>
<div class="a m" style="left:28.3px;top:214.72px;line-height:9.76px;color:#2e3436">Forward Delay: 15</div>
<div class="a m" style="left:28.3px;top:224.48px;line-height:9.76px;color:#2e3436">Version 1 Length: 0</div>
</div>
<div class="a" style="left:1.3px;top:536.1px;width:1021.7px;height:0.9px;background:#c8cac8"></div>
<div class="a" style="left:1.3px;top:539.3px;width:1021.7px;height:0.9px;background:#c8cac8"></div>
<div class="a" style="left:33.9px;top:336.1px;width:159.2px;height:15.8px;border:2.3px solid #f2281c"></div>
<div class="a" style="left:41.6px;top:375px;width:159.4px;height:16px;border:2.3px solid #f2281c"></div>
<div class="a" style="left:1.3px;top:540.2px;width:1021.7px;height:63.69999999999993px;background:#fff;overflow:hidden">
<div class="a" style="left:0;top:0;width:27px;height:63.69999999999993px;background:#eef0ee"></div>
<div class="a m hx" style="left:5.7px;top:0.09999999999990905px;line-height:9.04px;color:#b4b8b4">0000</div>
<div class="a m hx" style="left:32.6px;top:0.09999999999990905px;line-height:9.04px;color:#2e3436">01</div>
<div class="a m hx" style="left:265.09999999999997px;top:0.09999999999990905px;line-height:9.04px;color:#9a9e9a">·</div>
<div class="a m hx" style="left:46.229px;top:0.09999999999990905px;line-height:9.04px;color:#2e3436">80</div>
<div class="a m hx" style="left:269.643px;top:0.09999999999990905px;line-height:9.04px;color:#9a9e9a">·</div>
<div class="a m hx" style="left:59.858000000000004px;top:0.09999999999990905px;line-height:9.04px;color:#2e3436">c2</div>
<div class="a m hx" style="left:274.186px;top:0.09999999999990905px;line-height:9.04px;color:#9a9e9a">·</div>
<div class="a m hx" style="left:73.48700000000001px;top:0.09999999999990905px;line-height:9.04px;color:#2e3436">00</div>
<div class="a m hx" style="left:278.729px;top:0.09999999999990905px;line-height:9.04px;color:#9a9e9a">·</div>
<div class="a m hx" style="left:87.116px;top:0.09999999999990905px;line-height:9.04px;color:#2e3436">00</div>
<div class="a m hx" style="left:283.272px;top:0.09999999999990905px;line-height:9.04px;color:#9a9e9a">·</div>
<div class="a m hx" style="left:100.74499999999999px;top:0.09999999999990905px;line-height:9.04px;color:#2e3436">00</div>
<div class="a m hx" style="left:287.81499999999994px;top:0.09999999999990905px;line-height:9.04px;color:#9a9e9a">·</div>
<div class="a m hx" style="left:114.37400000000001px;top:0.09999999999990905px;line-height:9.04px;color:#2e3436">50</div>
<div class="a m hx" style="left:292.35799999999995px;top:0.09999999999990905px;line-height:9.04px;color:#2e3436">P</div>
<div class="a m hx" style="left:128.003px;top:0.09999999999990905px;line-height:9.04px;color:#2e3436">7f</div>
<div class="a m hx" style="left:296.90099999999995px;top:0.09999999999990905px;line-height:9.04px;color:#9a9e9a">·</div>
<div class="a m hx" style="left:146.17499999999998px;top:0.09999999999990905px;line-height:9.04px;color:#2e3436">11</div>
<div class="a m hx" style="left:305.98699999999997px;top:0.09999999999990905px;line-height:9.04px;color:#9a9e9a">·</div>
<div class="a m hx" style="left:159.804px;top:0.09999999999990905px;line-height:9.04px;color:#2e3436">00</div>
<div class="a m hx" style="left:310.53px;top:0.09999999999990905px;line-height:9.04px;color:#9a9e9a">·</div>
<div class="a m hx" style="left:173.433px;top:0.09999999999990905px;line-height:9.04px;color:#2e3436">2c</div>
<div class="a m hx" style="left:315.073px;top:0.09999999999990905px;line-height:9.04px;color:#2e3436">,</div>
<div class="a m hx" style="left:187.062px;top:0.09999999999990905px;line-height:9.04px;color:#2e3436">00</div>
<div class="a m hx" style="left:319.616px;top:0.09999999999990905px;line-height:9.04px;color:#9a9e9a">·</div>
<div class="a m hx" style="left:200.691px;top:0.09999999999990905px;line-height:9.04px;color:#2e3436">00</div>
<div class="a m hx" style="left:324.159px;top:0.09999999999990905px;line-height:9.04px;color:#9a9e9a">·</div>
<div class="a m hx" style="left:214.32px;top:0.09999999999990905px;line-height:9.04px;color:#2e3436">27</div>
<div class="a m hx" style="left:328.70199999999994px;top:0.09999999999990905px;line-height:9.04px;color:#2e3436">&#x27;</div>
<div class="a m hx" style="left:227.949px;top:0.09999999999990905px;line-height:9.04px;color:#2e3436">42</div>
<div class="a m hx" style="left:333.24499999999995px;top:0.09999999999990905px;line-height:9.04px;color:#2e3436">B</div>
<div class="a m hx" style="left:241.578px;top:0.09999999999990905px;line-height:9.04px;color:#2e3436">42</div>
<div class="a m hx" style="left:337.78799999999995px;top:0.09999999999990905px;line-height:9.04px;color:#2e3436">B</div>
<div class="a" style="left:45.629px;top:9.139999999999873px;width:205.03500000000003px;height:9.04px;background:#edf0ed"></div>
<div class="a" style="left:269.643px;top:9.139999999999873px;width:72.68799999999999px;height:9.04px;background:#edf0ed"></div>
<div class="a m hx" style="left:5.7px;top:9.139999999999873px;line-height:9.04px;color:#7b7f7b">0010</div>
<div class="a m hx" style="left:32.6px;top:9.139999999999873px;line-height:9.04px;color:#2e3436">03</div>
<div class="a m hx" style="left:265.09999999999997px;top:9.139999999999873px;line-height:9.04px;color:#9a9e9a">·</div>
<div class="a m hx" style="left:46.229px;top:9.139999999999873px;line-height:9.04px;color:#2e3436">00</div>
<div class="a m hx" style="left:269.643px;top:9.139999999999873px;line-height:9.04px;color:#2e3436">·</div>
<div class="a m hx" style="left:59.858000000000004px;top:9.139999999999873px;line-height:9.04px;color:#2e3436">00</div>
<div class="a m hx" style="left:274.186px;top:9.139999999999873px;line-height:9.04px;color:#2e3436">·</div>
<div class="a m hx" style="left:73.48700000000001px;top:9.139999999999873px;line-height:9.04px;color:#2e3436">02</div>
<div class="a m hx" style="left:278.729px;top:9.139999999999873px;line-height:9.04px;color:#2e3436">·</div>
<div class="a m hx" style="left:87.116px;top:9.139999999999873px;line-height:9.04px;color:#2e3436">02</div>
<div class="a m hx" style="left:283.272px;top:9.139999999999873px;line-height:9.04px;color:#2e3436">·</div>
<div class="a" style="left:100.34499999999998px;top:9.539999999999873px;width:9.886000000000001px;height:8.639999999999999px;background:#3490c8"></div>
<div class="a m hx" style="left:100.74499999999999px;top:9.139999999999873px;line-height:9.04px;color:#fff">79</div>
<div class="a" style="left:287.81499999999994px;top:9.539999999999873px;width:4.843px;height:8.639999999999999px;background:#3490c8"></div>
<div class="a m hx" style="left:287.81499999999994px;top:9.139999999999873px;line-height:9.04px;color:#fff">y</div>
<div class="a m hx" style="left:114.37400000000001px;top:9.139999999999873px;line-height:9.04px;color:#2e3436">60</div>
<div class="a m hx" style="left:292.35799999999995px;top:9.139999999999873px;line-height:9.04px;color:#2e3436">`</div>
<div class="a m hx" style="left:128.003px;top:9.139999999999873px;line-height:9.04px;color:#2e3436">01</div>
<div class="a m hx" style="left:296.90099999999995px;top:9.139999999999873px;line-height:9.04px;color:#2e3436">·</div>
<div class="a m hx" style="left:146.17499999999998px;top:9.139999999999873px;line-height:9.04px;color:#2e3436">50</div>
<div class="a m hx" style="left:305.98699999999997px;top:9.139999999999873px;line-height:9.04px;color:#2e3436">P</div>
<div class="a m hx" style="left:159.804px;top:9.139999999999873px;line-height:9.04px;color:#2e3436">af</div>
<div class="a m hx" style="left:310.53px;top:9.139999999999873px;line-height:9.04px;color:#2e3436">·</div>
<div class="a m hx" style="left:173.433px;top:9.139999999999873px;line-height:9.04px;color:#2e3436">64</div>
<div class="a m hx" style="left:315.073px;top:9.139999999999873px;line-height:9.04px;color:#2e3436">d</div>
<div class="a m hx" style="left:187.062px;top:9.139999999999873px;line-height:9.04px;color:#2e3436">00</div>
<div class="a m hx" style="left:319.616px;top:9.139999999999873px;line-height:9.04px;color:#2e3436">·</div>
<div class="a m hx" style="left:200.691px;top:9.139999999999873px;line-height:9.04px;color:#2e3436">2a</div>
<div class="a m hx" style="left:324.159px;top:9.139999999999873px;line-height:9.04px;color:#2e3436">*</div>
<div class="a m hx" style="left:214.32px;top:9.139999999999873px;line-height:9.04px;color:#2e3436">00</div>
<div class="a m hx" style="left:328.70199999999994px;top:9.139999999999873px;line-height:9.04px;color:#2e3436">·</div>
<div class="a m hx" style="left:227.949px;top:9.139999999999873px;line-height:9.04px;color:#2e3436">00</div>
<div class="a m hx" style="left:333.24499999999995px;top:9.139999999999873px;line-height:9.04px;color:#2e3436">·</div>
<div class="a m hx" style="left:241.578px;top:9.139999999999873px;line-height:9.04px;color:#2e3436">00</div>
<div class="a m hx" style="left:337.78799999999995px;top:9.139999999999873px;line-height:9.04px;color:#2e3436">·</div>
<div class="a" style="left:32.6px;top:18.17999999999995px;width:218.06400000000002px;height:9.04px;background:#edf0ed"></div>
<div class="a" style="left:265.09999999999997px;top:18.17999999999995px;width:77.231px;height:9.04px;background:#edf0ed"></div>
<div class="a m hx" style="left:5.7px;top:18.17999999999995px;line-height:9.04px;color:#b4b8b4">0020</div>
<div class="a m hx" style="left:32.6px;top:18.17999999999995px;line-height:9.04px;color:#2e3436">00</div>
<div class="a m hx" style="left:265.09999999999997px;top:18.17999999999995px;line-height:9.04px;color:#2e3436">·</div>
<div class="a m hx" style="left:46.229px;top:18.17999999999995px;line-height:9.04px;color:#2e3436">00</div>
<div class="a m hx" style="left:269.643px;top:18.17999999999995px;line-height:9.04px;color:#2e3436">·</div>
<div class="a m hx" style="left:59.858000000000004px;top:18.17999999999995px;line-height:9.04px;color:#2e3436">60</div>
<div class="a m hx" style="left:274.186px;top:18.17999999999995px;line-height:9.04px;color:#2e3436">`</div>
<div class="a m hx" style="left:73.48700000000001px;top:18.17999999999995px;line-height:9.04px;color:#2e3436">01</div>
<div class="a m hx" style="left:278.729px;top:18.17999999999995px;line-height:9.04px;color:#2e3436">·</div>
<div class="a m hx" style="left:87.116px;top:18.17999999999995px;line-height:9.04px;color:#2e3436">50</div>
<div class="a m hx" style="left:283.272px;top:18.17999999999995px;line-height:9.04px;color:#2e3436">P</div>
<div class="a m hx" style="left:100.74499999999999px;top:18.17999999999995px;line-height:9.04px;color:#2e3436">af</div>
<div class="a m hx" style="left:287.81499999999994px;top:18.17999999999995px;line-height:9.04px;color:#2e3436">·</div>
<div class="a m hx" style="left:114.37400000000001px;top:18.17999999999995px;line-height:9.04px;color:#2e3436">64</div>
<div class="a m hx" style="left:292.35799999999995px;top:18.17999999999995px;line-height:9.04px;color:#2e3436">d</div>
<div class="a m hx" style="left:128.003px;top:18.17999999999995px;line-height:9.04px;color:#2e3436">00</div>
<div class="a m hx" style="left:296.90099999999995px;top:18.17999999999995px;line-height:9.04px;color:#2e3436">·</div>
<div class="a m hx" style="left:146.17499999999998px;top:18.17999999999995px;line-height:9.04px;color:#2e3436">2a</div>
<div class="a m hx" style="left:305.98699999999997px;top:18.17999999999995px;line-height:9.04px;color:#2e3436">*</div>
<div class="a m hx" style="left:159.804px;top:18.17999999999995px;line-height:9.04px;color:#2e3436">00</div>
<div class="a m hx" style="left:310.53px;top:18.17999999999995px;line-height:9.04px;color:#2e3436">·</div>
<div class="a m hx" style="left:173.433px;top:18.17999999999995px;line-height:9.04px;color:#2e3436">80</div>
<div class="a m hx" style="left:315.073px;top:18.17999999999995px;line-height:9.04px;color:#2e3436">·</div>
<div class="a m hx" style="left:187.062px;top:18.17999999999995px;line-height:9.04px;color:#2e3436">01</div>
<div class="a m hx" style="left:319.616px;top:18.17999999999995px;line-height:9.04px;color:#2e3436">·</div>
<div class="a m hx" style="left:200.691px;top:18.17999999999995px;line-height:9.04px;color:#2e3436">00</div>
<div class="a m hx" style="left:324.159px;top:18.17999999999995px;line-height:9.04px;color:#2e3436">·</div>
<div class="a m hx" style="left:214.32px;top:18.17999999999995px;line-height:9.04px;color:#2e3436">00</div>
<div class="a m hx" style="left:328.70199999999994px;top:18.17999999999995px;line-height:9.04px;color:#2e3436">·</div>
<div class="a m hx" style="left:227.949px;top:18.17999999999995px;line-height:9.04px;color:#2e3436">14</div>
<div class="a m hx" style="left:333.24499999999995px;top:18.17999999999995px;line-height:9.04px;color:#2e3436">·</div>
<div class="a m hx" style="left:241.578px;top:18.17999999999995px;line-height:9.04px;color:#2e3436">00</div>
<div class="a m hx" style="left:337.78799999999995px;top:18.17999999999995px;line-height:9.04px;color:#2e3436">·</div>
<div class="a" style="left:32.6px;top:27.219999999999914px;width:63.602px;height:9.04px;background:#edf0ed"></div>
<div class="a" style="left:265.09999999999997px;top:27.219999999999914px;width:22.715000000000032px;height:9.04px;background:#edf0ed"></div>
<div class="a m hx" style="left:5.7px;top:27.219999999999914px;line-height:9.04px;color:#b4b8b4">0030</div>
<div class="a m hx" style="left:32.6px;top:27.219999999999914px;line-height:9.04px;color:#2e3436">02</div>
<div class="a m hx" style="left:265.09999999999997px;top:27.219999999999914px;line-height:9.04px;color:#2e3436">·</div>
<div class="a m hx" style="left:46.229px;top:27.219999999999914px;line-height:9.04px;color:#2e3436">00</div>
<div class="a m hx" style="left:269.643px;top:27.219999999999914px;line-height:9.04px;color:#2e3436">·</div>
<div class="a m hx" style="left:59.858000000000004px;top:27.219999999999914px;line-height:9.04px;color:#2e3436">0f</div>
<div class="a m hx" style="left:274.186px;top:27.219999999999914px;line-height:9.04px;color:#2e3436">·</div>
<div class="a m hx" style="left:73.48700000000001px;top:27.219999999999914px;line-height:9.04px;color:#2e3436">00</div>
<div class="a m hx" style="left:278.729px;top:27.219999999999914px;line-height:9.04px;color:#2e3436">·</div>
<div class="a m hx" style="left:87.116px;top:27.219999999999914px;line-height:9.04px;color:#2e3436">00</div>
<div class="a m hx" style="left:283.272px;top:27.219999999999914px;line-height:9.04px;color:#2e3436">·</div>
<div class="a m hx" style="left:100.74499999999999px;top:27.219999999999914px;line-height:9.04px;color:#2e3436">00</div>
<div class="a m hx" style="left:287.81499999999994px;top:27.219999999999914px;line-height:9.04px;color:#9a9e9a">·</div>
<div class="a m hx" style="left:114.37400000000001px;top:27.219999999999914px;line-height:9.04px;color:#2e3436">00</div>
<div class="a m hx" style="left:292.35799999999995px;top:27.219999999999914px;line-height:9.04px;color:#9a9e9a">·</div>
<div class="a m hx" style="left:128.003px;top:27.219999999999914px;line-height:9.04px;color:#2e3436">00</div>
<div class="a m hx" style="left:296.90099999999995px;top:27.219999999999914px;line-height:9.04px;color:#9a9e9a">·</div>
<div class="a m hx" style="left:146.17499999999998px;top:27.219999999999914px;line-height:9.04px;color:#2e3436">00</div>
<div class="a m hx" style="left:305.98699999999997px;top:27.219999999999914px;line-height:9.04px;color:#9a9e9a">·</div>
<div class="a m hx" style="left:159.804px;top:27.219999999999914px;line-height:9.04px;color:#2e3436">00</div>
<div class="a m hx" style="left:310.53px;top:27.219999999999914px;line-height:9.04px;color:#9a9e9a">·</div>
<div class="a m hx" style="left:173.433px;top:27.219999999999914px;line-height:9.04px;color:#2e3436">00</div>
<div class="a m hx" style="left:315.073px;top:27.219999999999914px;line-height:9.04px;color:#9a9e9a">·</div>
<div class="a m hx" style="left:187.062px;top:27.219999999999914px;line-height:9.04px;color:#2e3436">00</div>
<div class="a m hx" style="left:319.616px;top:27.219999999999914px;line-height:9.04px;color:#9a9e9a">·</div>
</div>
<div class="a" style="left:0;top:603.9px;width:1023px;height:0.9px;background:#c8cac8"></div>
<div class="a" style="left:0;top:604.8px;width:1023px;height:13.2px;background:#eef0ee"></div>
<svg class="a" style="left:6px;top:606.5px" width="28" height="11"><circle cx="5.6" cy="5.1" r="4.2" fill="#b9bab9" stroke="#8a8b8a" stroke-width="0.8"/><rect x="16.3" y="1.3" width="8.4" height="8.6" fill="#f4f4f4" stroke="#c8c8c8" stroke-width="0.6"/><rect x="16.4" y="1.3" width="5" height="2" fill="#4aa3ea"/><path d="M18.6 8 L24.8 1.2" stroke="#2b2b2b" stroke-width="1.3"/></svg>
<div class="a t" style="left:41.6px;top:606.8px;line-height:10px;font-size:8.7px;letter-spacing:0.05px;color:#2e3436">Proposal (stp.flags.proposal), 1 byte(s)</div>
<div class="a" style="left:672.4px;top:607px;width:0.8px;height:9px;background:#dde0dd"></div>
<div class="a t" style="left:681px;top:606.6px;line-height:10px;font-size:8.7px;color:#2e3436">Packets: 35 · Displayed: 21 (60.0%) · Dropped: 0 (0.0%)</div>
<div class="a" style="left:955.8px;top:607px;width:0.8px;height:9px;background:#dde0dd"></div>
<div class="a t" style="left:964.5px;top:606.6px;line-height:10px;font-size:8.7px;color:#2e3436">Profile: Default</div>
<svg class="a" style="left:1016px;top:610px" width="7" height="8"><path d="M6 1 L1 7 M6 4 L4 7" stroke="#888" stroke-width="0.8"/></svg>
</body></html>
